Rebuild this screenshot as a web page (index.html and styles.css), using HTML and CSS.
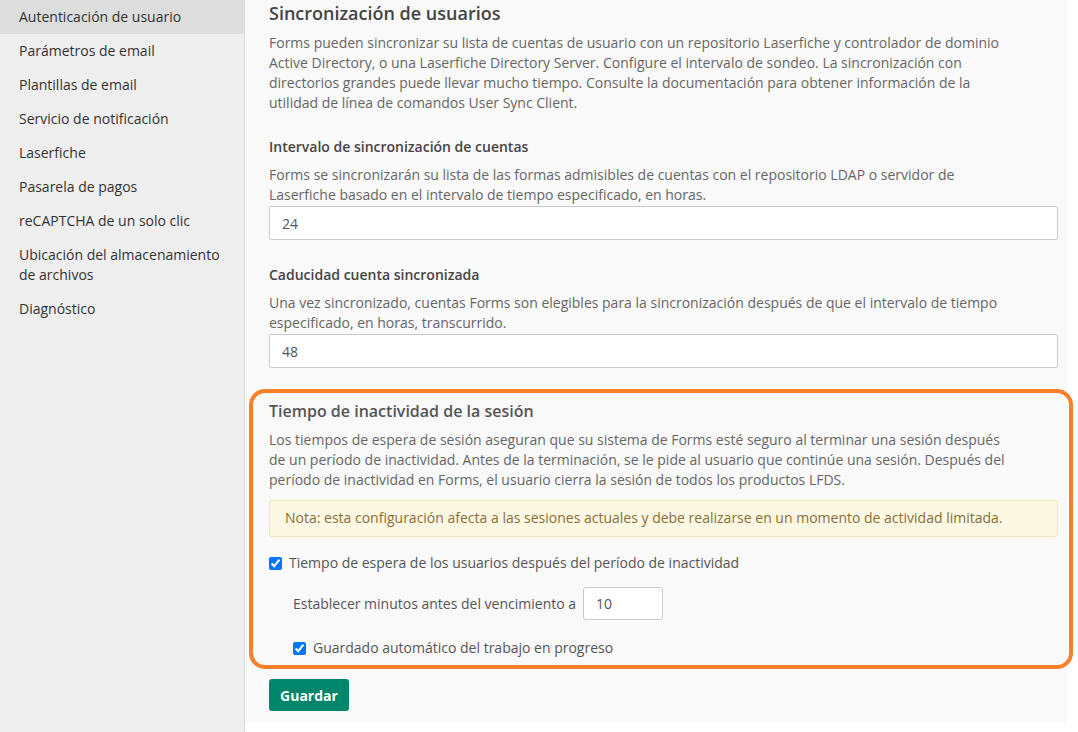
FILE: index.html
```html
<!DOCTYPE html>
<html lang="es">
<head>
  <meta charset="UTF-8" />
  <meta name="viewport" content="width=device-width, initial-scale=1.0"/>
  <title>Autenticación de usuario</title>
  <link rel="stylesheet" href="styles.css">
</head>
<body>
  <div class="layout">
    <nav class="sidebar">
      <a class="nav-item active" href="#">Autenticación de usuario</a>
      <a class="nav-item" href="#">Parámetros de email</a>
      <a class="nav-item" href="#">Plantillas de email</a>
      <a class="nav-item" href="#">Servicio de notificación</a>
      <a class="nav-item" href="#">Laserfiche</a>
      <a class="nav-item" href="#">Pasarela de pagos</a>
      <a class="nav-item" href="#">reCAPTCHA de un solo clic</a>
      <a class="nav-item" href="#">Ubicación del almacenamiento de archivos</a>
      <a class="nav-item" href="#">Diagnóstico</a>
    </nav>

    <main class="content">
      <h2>Sincronización de usuarios</h2>
      <p class="intro">Forms pueden sincronizar su lista de cuentas de usuario con un repositorio Laserfiche y controlador de dominio Active Directory, o una Laserfiche Directory Server. Configure el intervalo de sondeo. La sincronización con directorios grandes puede llevar mucho tiempo. Consulte la documentación para obtener información de la utilidad de línea de comandos User Sync Client.</p>

      <div class="field">
        <label for="syncInterval">Intervalo de sincronización de cuentas</label>
        <p class="help">Forms se sincronizarán su lista de las formas admisibles de cuentas con el repositorio LDAP o servidor de Laserfiche basado en el intervalo de tiempo especificado, en horas.</p>
        <input type="text" id="syncInterval" value="24" />
      </div>

      <div class="field">
        <label for="syncExpiry">Caducidad cuenta sincronizada</label>
        <p class="help">Una vez sincronizado, cuentas Forms son elegibles para la sincronización después de que el intervalo de tiempo especificado, en horas, transcurrido.</p>
        <input type="text" id="syncExpiry" value="48" />
      </div>

      <section class="session-box">
        <h3>Tiempo de inactividad de la sesión</h3>
        <p class="intro">Los tiempos de espera de sesión aseguran que su sistema de Forms esté seguro al terminar una sesión después de un período de inactividad. Antes de la terminación, se le pide al usuario que continúe una sesión. Después del período de inactividad en Forms, el usuario cierra la sesión de todos los productos LFDS.</p>
        <div class="note">Nota: esta configuración afecta a las sesiones actuales y debe realizarse en un momento de actividad limitada.</div>

        <label class="check-row">
          <input type="checkbox" checked />
          Tiempo de espera de los usuarios después del período de inactividad
        </label>
        <div class="sub-options">
          <div class="minutes-row">
            <span>Establecer minutos antes del vencimiento a</span>
            <input type="text" class="small-input" value="10" />
          </div>
          <label class="check-row">
            <input type="checkbox" checked />
            Guardado automático del trabajo en progreso
          </label>
        </div>
      </section>

      <button type="button" class="save-btn">Guardar</button>
    </main>
  </div>
</body>
</html>
```

FILE: styles.css
```css
body {
  margin: 0;
  background: #fff;
  font-family: "Open Sans", Arial, sans-serif;
  font-size: 14px;
  color: #555;
}

.layout {
  display: flex;
  align-items: flex-start;
}

.sidebar {
  width: 244px;
  min-height: 100vh;
  background: #eeeeee;
  border-right: 1px solid #dcdcdc;
  flex-shrink: 0;
}

.nav-item {
  display: block;
  padding: 7px 19px;
  line-height: 20px;
  color: #333;
  text-decoration: none;
}

.nav-item.active {
  background: #dddddd;
}

.content {
  width: 789px;
  height: 723px;
  padding: 0 9px 0 24px;
  background: #f9f9f9;
}

h2 {
  margin: 0;
  font-size: 18px;
  font-weight: 600;
  line-height: 26px;
  color: #444;
}

h3 {
  margin: 0;
  font-size: 16px;
  font-weight: 600;
  line-height: 22px;
  color: #555;
}

.intro {
  margin: 7px 0 0;
  line-height: 20px;
  max-width: 745px;
  color: #666;
}

.field {
  margin-top: 24px;
}

.field + .field {
  margin-top: 25px;
}

.field label {
  display: block;
  font-weight: 600;
  line-height: 20px;
  color: #444;
}

.help {
  margin: 8px 0 1px;
  line-height: 20px;
  max-width: 745px;
  color: #666;
}

.field input {
  display: block;
  box-sizing: border-box;
  width: 100%;
  height: 34px;
  padding: 6px 12px;
  border: 1px solid #ccc;
  border-radius: 2px;
  font-family: inherit;
  font-size: 14px;
  color: #555;
  background: #fff;
}

.session-box {
  margin: 21px -15px 0 -20px;
  padding: 7px 11px 7px 16px;
  border: 4px solid #fd7f28;
  border-radius: 16px;
}

.session-box .intro {
  margin-top: 8px;
}

.note {
  margin-top: 10px;
  padding: 7px 15px 8px;
  line-height: 20px;
  background: #fcf8e3;
  border: 1px solid #f6e6b4;
  border-radius: 3px;
  color: #8a6d3b;
}

.check-row {
  display: flex;
  align-items: center;
  line-height: 20px;
  color: #555;
}

.session-box > .check-row {
  margin-top: 16px;
}

.check-row input {
  width: 13px;
  height: 13px;
  margin: 0 7px 0 0;
}

.sub-options {
  padding-left: 24px;
}

.minutes-row {
  display: flex;
  align-items: center;
  gap: 7px;
  margin-top: 14px;
  margin-bottom: 18px;
}

.small-input {
  box-sizing: border-box;
  width: 80px;
  height: 33px;
  padding: 6px 12px;
  border: 1px solid #ccc;
  border-radius: 3px;
  font-family: inherit;
  font-size: 14px;
  color: #555;
  background: #fff;
}

.save-btn {
  margin-top: 10px;
  width: 80px;
  height: 32px;
  background: #00866a;
  color: #fff;
  border: none;
  border-radius: 3px;
  font-family: inherit;
  font-size: 14px;
  font-weight: 700;
  cursor: pointer;
}
```
